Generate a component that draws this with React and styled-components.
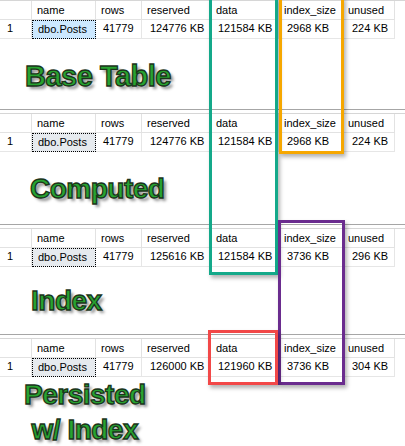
import React from 'react';
import styled, { createGlobalStyle } from 'styled-components';

const Global = createGlobalStyle`
  html, body { margin: 0; padding: 0; background: #fff; }
  body {
    width: 405px; height: 446px; overflow: hidden;
    font-family: "Liberation Sans", Arial, sans-serif;
  }
`;

const Page = styled.div`
  position: relative;
  width: 405px;
  height: 446px;
  overflow: hidden;
  display: flex;
  flex-direction: column;
  background: #fff;
`;

const Panel = styled.section`
  height: ${p => p.$h}px;
  flex: none;
  box-sizing: border-box;
  border-top: ${p => (p.$first ? 'none' : '1px solid #a6a6a6')};
  padding-top: ${p => (p.$first ? 0 : 3)}px;
  display: flex;
  flex-direction: column;
`;

const Grid = styled.div`
  display: grid;
  grid-template-columns: 32px 64px 46px 69px 68px 64px 52px 1fr;
  border-top: 1px solid #d6d6d6;
  font-family: "Liberation Sans", Arial, sans-serif;
  font-size: 11px;
  color: #000;
`;

const HeadCell = styled.div`
  box-sizing: border-box;
  height: 19px;
  line-height: 18px;
  padding-left: 5px;
  border-right: ${p => (p.$filler ? 'none' : '1px solid #e2e2e2')};
  border-bottom: ${p => (p.$filler ? 'none' : '1px solid #e2e2e2')};
  white-space: nowrap;
  background: #fff;
`;

const Cell = styled.div`
  box-sizing: border-box;
  height: 19px;
  line-height: 17px;
  padding-left: ${p => p.$pad ?? 7}px;
  border-right: ${p => (p.$filler ? 'none' : '1px solid #e6e6e6')};
  border-bottom: ${p => (p.$filler ? 'none' : '1px solid #e6e6e6')};
  white-space: nowrap;
`;

const SelectedCell = styled.div`
  box-sizing: border-box;
  height: 19px;
  line-height: 17px;
  padding-left: 5px;
  border: 1px dotted #000;
  background: ${p => (p.$active ? '#cce8ff' : '#e6eaee')};
  white-space: nowrap;
`;

const Caption = styled.div`
  margin-top: ${p => p.$top}px;
  margin-left: ${p => p.$left}px;
  width: fit-content;
  font-family: "Liberation Sans", Arial, sans-serif;
  font-weight: bold;
  font-size: ${p => p.$size}px;
  line-height: 35px;
  letter-spacing: ${p => p.$ls ?? -0.5}px;
  text-align: center;
  white-space: nowrap;
  color: #27a330;
  -webkit-text-stroke: 1.3px #1b351b;
  text-shadow: 3px 3px 3px rgba(0, 0, 0, 0.42);
`;

const Highlight = styled.div`
  position: absolute;
  left: ${p => p.$x}px;
  top: ${p => p.$y}px;
  width: ${p => p.$w}px;
  height: ${p => p.$h}px;
  box-sizing: border-box;
  border: 3px solid ${p => p.$c};
  box-shadow: 2px 3px 4px rgba(0, 0, 0, 0.3);
  pointer-events: none;
`;

const HEADERS = ['', 'name', 'rows', 'reserved', 'data', 'index_size', 'unused'];

const PANELS = [
  { h: 109, first: true, active: true, vals: ['124776 KB', '121584 KB', '2968 KB', '224 KB'],
    caption: ['Base Table'], top: 20, left: 25, size: 29 },
  { h: 115, vals: ['124776 KB', '121584 KB', '2968 KB', '224 KB'],
    caption: ['Computed'], top: 19, left: 30, size: 28 },
  { h: 110, vals: ['125616 KB', '121584 KB', '3736 KB', '296 KB'],
    caption: ['Index'], top: 16, left: 31, size: 28 },
  { h: 112, vals: ['126000 KB', '121960 KB', '3736 KB', '304 KB'],
    caption: ['Persisted', 'w/ Index'], top: 0, left: 24, size: 28 },
];

function ResultGrid({ vals, active }) {
  return (
    <Grid>
      {HEADERS.map((h, i) => (
        <HeadCell key={i}>{h}</HeadCell>
      ))}
      <HeadCell $filler />
      <Cell $pad={7}>1</Cell>
      <SelectedCell $active={active}>dbo.Posts</SelectedCell>
      <Cell $pad={7}>41779</Cell>
      <Cell $pad={8}>{vals[0]}</Cell>
      <Cell $pad={7}>{vals[1]}</Cell>
      <Cell $pad={8}>{vals[2]}</Cell>
      <Cell $pad={9}>{vals[3]}</Cell>
      <Cell $filler />
    </Grid>
  );
}

export default function App() {
  return (
    <>
      <Global />
      <Page>
        {PANELS.map((p, i) => (
          <Panel key={i} $h={p.h} $first={p.first}>
            <ResultGrid vals={p.vals} active={p.active} />
            <Caption $top={p.top} $left={p.left} $size={p.size}>
              {p.caption.map((line, j) => (
                <div key={j}>{line}</div>
              ))}
            </Caption>
          </Panel>
        ))}
        <Highlight $x={209} $y={-3} $w={69} $h={278} $c="#14a98a" />
        <Highlight $x={279} $y={-3} $w={65} $h={157} $c="#f6a700" />
        <Highlight $x={278} $y={220} $w={67} $h={165} $c="#6a2c8e" />
        <Highlight $x={208} $y={330} $w={70} $h={55} $c="#f24848" />
      </Page>
    </>
  );
}
